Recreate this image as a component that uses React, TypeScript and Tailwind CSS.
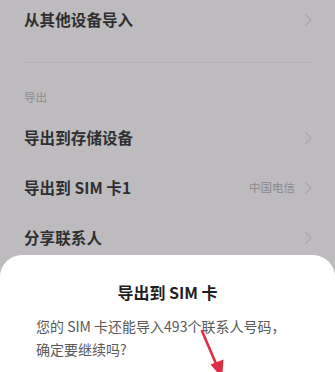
import React from "react";

const Chevron = () => (
  <svg width="7" height="12" viewBox="0 0 7 12" className="shrink-0">
    <path d="M1 1 L6 6 L1 11" fill="none" stroke="#a9a8ab" strokeWidth="1.3" strokeLinecap="round" strokeLinejoin="round" />
  </svg>
);

const Row = ({ label, extra, h }: { label: string; extra?: string; h: string }) => (
  <div className={`flex items-center justify-between pl-6 pr-[23px] ${h}`}>
    <span className="text-[15.5px] font-bold text-[#2f2f31] tracking-[0.1px]">{label}</span>
    <div className="flex items-center gap-[10px]">
      {extra && <span className="text-[11.5px] text-[#8a898d]">{extra}</span>}
      <Chevron />
    </div>
  </div>
);

export default function App() {
  return (
    <div
      className="relative w-[335px] h-[372px] overflow-hidden bg-[#bdbbbe]"
      style={{ fontFamily: '"Noto Sans CJK SC", "Noto Sans", sans-serif' }}
    >
      <div className="flex flex-col">
        <Row label="从其他设备导入" h="h-[40px]" />
        <div className="mt-[22px] mx-6 h-px bg-[#b3b1b4]" />
        <div className="mt-[25px] pl-6 h-[20px] flex items-center text-[11.5px] text-[#8d8c90]">导出</div>
        <div className="mt-[5px]">
          <Row label="导出到存储设备" h="h-[50px]" />
          <Row label="导出到 SIM 卡1" extra="中国电信" h="h-[50px]" />
          <Row label="分享联系人" h="h-[50px]" />
        </div>
      </div>

      <div className="absolute left-0 right-0 top-[255px] h-[160px] bg-white rounded-t-[22px]">
        <div className="pt-[25px] text-center text-[16px] leading-[24px] font-semibold text-[#1f1f1f]">
          导出到 SIM 卡
        </div>
        <div className="mt-[11px] px-9 text-[14px] leading-[23px] text-[#595959]">
          您的 SIM 卡还能导入493个联系人号码，
          <br />
          确定要继续吗?
        </div>
      </div>

      <svg className="absolute left-0 top-0" width="335" height="372" viewBox="0 0 335 372">
        <line x1="202" y1="331" x2="217" y2="366" stroke="#dc2f45" strokeWidth="2.6" strokeLinecap="round" />
        <polygon points="210.5,364.6 223.5,359.4 222.2,378" fill="#dc2f45" />
      </svg>
    </div>
  );
}
